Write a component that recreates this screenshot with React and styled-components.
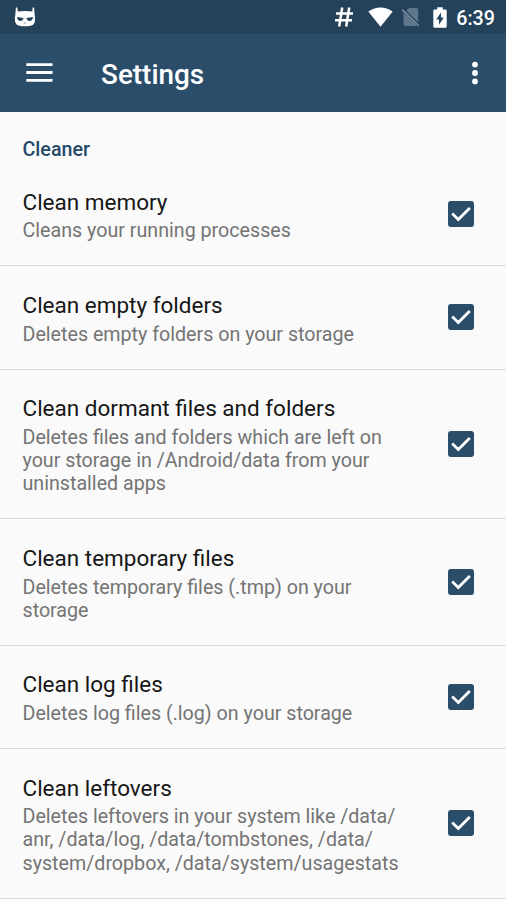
import { useState } from 'react';
import styled, { createGlobalStyle } from 'styled-components';

const GlobalStyle = createGlobalStyle`
    * {
        box-sizing: border-box;
    }
    body {
        margin: 0;
        background: #fafafa;
        font-family: Roboto, "Noto Sans", sans-serif;
    }
`

const Screen = styled.div`
    width: 506px;
    height: 900px;
    overflow: hidden;
    background: #fafafa;
`

// STATUS BAR ------------------------------------------------------------
const StatusBar = styled.div`
    height: 34px;
    padding: 0 11px 0 14px;
    display: flex;
    align-items: center;
    background: #25425b;
    color: #fff;
`

const StatusIcons = styled.div`
    margin-left: auto;
    display: flex;
    align-items: center;
`

const Clock = styled.span`
    margin-left: 9px;
    padding-top: 3px;
    font-size: 19.7px;
    font-weight: 500;
    line-height: 31px;
`

// TOOLBAR ---------------------------------------------------------------
const Toolbar = styled.header`
    height: 78px;
    padding: 0 25px 0 26px;
    display: flex;
    align-items: center;
    background: #2a4d69;
    color: #fff;
`

const IconButton = styled.button`
    padding: 0;
    border: none;
    display: flex;
    background: none;
    color: inherit;
    cursor: pointer;
`

const PageTitle = styled.h1`
    flex: 1;
    margin: 3px 0 0 48px;
    font-size: 27.9px;
    font-weight: 500;
    line-height: 34px;
`

// LIST ------------------------------------------------------------------
const SectionTitle = styled.h2`
    height: 51px;
    margin: 0;
    padding: 26px 22.5px 0;
    color: #25496a;
    font-size: 19.7px;
    font-weight: 500;
    line-height: 24px;
`

const Row = styled.label`
    padding: 24.7px 32px 23.1px 22.5px;
    display: flex;
    align-items: center;
    border-bottom: 1px solid #dadada;
    cursor: pointer;
`

const RowText = styled.div`
    flex: 1;
`

const RowTitle = styled.div`
    font-size: 22.5px;
    line-height: 28px;
    padding-bottom: 3.5px;
    color: #161616;
`

const RowDesc = styled.div`
    font-size: 19.67px;
    line-height: 23.1px;
    color: #747474;
    white-space: pre-line;
`

const HiddenInput = styled.input`
    width: 0;
    height: 0;
    margin: 0;
    opacity: 0;
`

const Box = styled.span`
    width: 26px;
    height: 26px;
    margin-bottom: 2px;
    border-radius: 3px;
    border: 2.5px solid ${({ $checked }) => ($checked ? "#2a4d69" : "#757575")};
    display: flex;
    align-items: center;
    justify-content: center;
    background: ${({ $checked }) => ($checked ? "#2a4d69" : "transparent")};
    svg {
        flex: none;
    }
`

const items = [
    { title: "Clean memory", desc: "Cleans your running processes" },
    { title: "Clean empty folders", desc: "Deletes empty folders on your storage" },
    {
        title: "Clean dormant files and folders",
        desc: "Deletes files and folders which are left on\nyour storage in /Android/data from your\nuninstalled apps",
    },
    { title: "Clean temporary files", desc: "Deletes temporary files (.tmp) on your\nstorage" },
    { title: "Clean log files", desc: "Deletes log files (.log) on your storage" },
    {
        title: "Clean leftovers",
        desc: "Deletes leftovers in your system like /data/\nanr, /data/log, /data/tombstones, /data/\nsystem/dropbox, /data/system/usagestats",
    },
]

const CidIcon = () => (
    <svg width="22" height="20" viewBox="0 0 22 20">
        <path d="M1.9 0.4 H3.3 L3.8 4.6 Q11 3.2 18.2 4.6 L18.7 0.4 H20.1 L20.6 7 Q21.5 11 20.9 14.6 Q20 18.7 15.5 19.1 Q11 19.6 6.5 19.1 Q2 18.7 1.1 14.6 Q0.5 11 1.4 7 Z" fill="#fff" />
        <path d="M3 9.9 L9.6 11 Q8.8 14 6.4 14 Q3.5 13.9 3 9.9 Z M19 9.9 L12.4 11 Q13.2 14 15.6 14 Q18.5 13.9 19 9.9 Z" fill="#25425b" />
        <path d="M9.9 15.8 L12.1 15.8 L11 16.8 Z" fill="#25425b" />
    </svg>
)

const HashIcon = () => (
    <svg width="20" height="20" viewBox="0 0 20 20" fill="none" stroke="#fff" strokeWidth="2.5">
        <path d="M8.2 0.5 L5.2 19.5 M15.2 0.5 L12.2 19.5 M2 6.5 H19 M1 13.3 H18" />
    </svg>
)

const WifiIcon = () => (
    <svg width="25" height="20" viewBox="0 0 25 20" style={{ marginLeft: 14 }}>
        <path d="M0.3 4.6 Q12.5 -3.8 24.7 4.6 L12.5 19.8 Z" fill="#fff" />
    </svg>
)

const NoSimIcon = () => (
    <svg width="20" height="20" viewBox="0 0 20 20" style={{ marginLeft: 8 }}>
        <path d="M8 1 H15.5 Q17.2 1 17.2 2.7 V15.4 L4.8 4.2 Z M2.6 5.6 L16.5 18.2 Q16 19 15 19 H4.3 Q2.6 19 2.6 17.3 Z" fill="#5f778b" />
        <path d="M1.2 2 L18.4 18.8" stroke="#25425b" strokeWidth="3" />
        <path d="M1.2 2.6 L17.8 18.8" stroke="#7d90a0" strokeWidth="1.5" />
    </svg>
)

const BatteryIcon = () => (
    <svg width="14" height="21" viewBox="0 0 14 21" style={{ marginLeft: 12 }}>
        <path d="M4.2 0.3 H9.8 V2.4 H12.4 Q13.7 2.4 13.7 3.7 V19.4 Q13.7 20.7 12.4 20.7 H1.6 Q0.3 20.7 0.3 19.4 V3.7 Q0.3 2.4 1.6 2.4 H4.2 Z" fill="#fff" />
        <path d="M8 5.4 L3.2 12.5 H6 V17.8 L10.8 10.6 H8 Z" fill="#25425b" />
    </svg>
)

const MenuIcon = () => (
    <svg width="27" height="20" viewBox="0 0 27 20">
        <path d="M0.3 1.6 H26.5 M0.3 9.5 H26.5 M0.3 17.4 H26.5" stroke="#fff" strokeWidth="2.8" />
    </svg>
)

const MoreIcon = () => (
    <svg width="12" height="24" viewBox="0 0 12 24" fill="#fff">
        <circle cx="6" cy="3.6" r="2.9" />
        <circle cx="6" cy="12" r="2.9" />
        <circle cx="6" cy="20.4" r="2.9" />
    </svg>
)

const CheckIcon = () => (
    <svg width="22" height="22" viewBox="0 0 22 22" fill="none">
        <path d="M2.2 10.6 L8.3 16.6 L19.8 5" stroke="#fff" strokeWidth="2.8" />
    </svg>
)

const Setting = ({ title, desc }) => {
  const [checked, setChecked] = useState(true);

  return (
    <Row>
        <RowText>
            <RowTitle>{title}</RowTitle>
            <RowDesc>{desc}</RowDesc>
        </RowText>
        <HiddenInput type="checkbox" checked={checked} onChange={() => setChecked(!checked)} />
        <Box $checked={checked}>{checked && <CheckIcon />}</Box>
    </Row>
  )
}

const App = () => {
  return (
    <Screen>
        <GlobalStyle />
        <StatusBar>
            <CidIcon />
            <StatusIcons>
                <HashIcon />
                <WifiIcon />
                <NoSimIcon />
                <BatteryIcon />
                <Clock>6:39</Clock>
            </StatusIcons>
        </StatusBar>
        <Toolbar>
            <IconButton aria-label="Menu"><MenuIcon /></IconButton>
            <PageTitle>Settings</PageTitle>
            <IconButton aria-label="More options"><MoreIcon /></IconButton>
        </Toolbar>
        <SectionTitle>Cleaner</SectionTitle>
        {items.map((item) => (
            <Setting key={item.title} title={item.title} desc={item.desc} />
        ))}
    </Screen>
  )
}

export default App;
